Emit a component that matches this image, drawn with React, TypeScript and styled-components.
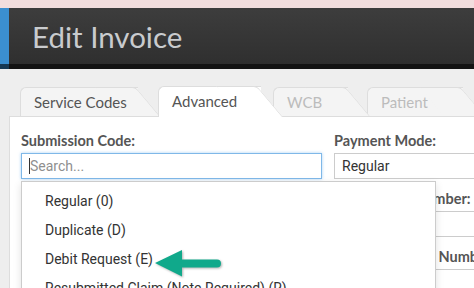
import React from 'react'
import styled, { createGlobalStyle, css } from 'styled-components'

const GlobalStyle = createGlobalStyle`
  html, body {
    margin: 0;
    padding: 0;
    background: #eeeeee;
    overflow: hidden;
  }
  body {
    font-family: Lato, "Open Sans", sans-serif;
  }
`

const Page = styled.div`
  position: relative;
  width: 474px;
  height: 288px;
  overflow: hidden;
`

const AlertStrip = styled.div`
  height: 8px;
  background: #f2dede;
`

const Header = styled.header`
  display: flex;
  height: 61px;
  background: linear-gradient(#3d3d3d, #2e2e2e);
  box-shadow: inset 0 -5px 0 #141414;
`

const Accent = styled.div`
  width: 9px;
  background: #3b8fd0;
  box-shadow: inset 0 -5px 0 rgba(0, 0, 0, 0.6);
`

const Title = styled.h1`
  margin: 0;
  padding: 0 0 5px 23px;
  display: flex;
  align-items: center;
  font-family: Lato, sans-serif;
  font-weight: 400;
  font-size: 29.5px;
  color: #c9cbce;
`

const Content = styled.div`
  padding-top: 17px;
`

const TabRow = styled.div`
  position: relative;
  z-index: 2;
  display: flex;
  padding-left: 20px;
  margin-bottom: -1px;
`

const Tab = styled.div<{
  $active?: boolean
  $disabled?: boolean
  $z: number
  $width: number
  $overlap: number
}>`
  position: relative;
  flex: 0 0 auto;
  box-sizing: border-box;
  width: ${(p) => p.$width}px;
  margin-right: -${(p) => p.$overlap}px;
  z-index: ${(p) => (p.$active ? 20 : p.$z)};
  height: ${(p) => (p.$active ? 31 : 30)}px;
  line-height: 30px;
  padding-left: 14px;
  white-space: nowrap;
  font-size: 15px;
  color: ${(p) => (p.$disabled ? '#bcbcbc' : '#555')};
  margin-top: ${(p) => (p.$active ? '0' : '1px')};

  &::before,
  &::after {
    content: '';
    position: absolute;
    z-index: -1;
    top: 0;
    bottom: ${(p) => (p.$active ? '0' : '1px')};
    background: ${(p) => (p.$active ? '#ffffff' : '#f4f4f4')};
    border-top: 1px solid #dddddd;
  }

  &::before {
    left: 0;
    right: 22px;
    border-left: 1px solid #dddddd;
    border-top-left-radius: 6px;
  }

  &::after {
    right: 0;
    width: 40px;
    border-right: 1px solid #dddddd;
    border-top-right-radius: 4px;
    transform: skewX(40deg);
    transform-origin: bottom right;
  }
`

const Panel = styled.div`
  position: relative;
  z-index: 1;
  margin-left: 9px;
  width: 700px;
  height: 300px;
  background: #ffffff;
  border-top: 1px solid #dddddd;
  border-left: 1px solid #dddddd;
  padding: 14px 0 0 11px;
`

const FormGrid = styled.div`
  display: grid;
  grid-template-columns: 301px 301px;
  column-gap: 12px;
`

const Column = styled.div`
  display: flex;
  flex-direction: column;
  gap: 10px;
`

const Field = styled.div`
  position: relative;
  display: flex;
  flex-direction: column;
  gap: 2px;
`

const Label = styled.label`
  font-family: Lato, sans-serif;
  font-weight: 700;
  font-size: 14.5px;
  line-height: 20px;
  color: #555;
  white-space: nowrap;
`

const controlBase = css`
  box-sizing: border-box;
  height: 26px;
  width: 100%;
  margin: 0;
  border: 1px solid #cccccc;
  background: #ffffff;
  font-family: Roboto, sans-serif;
  font-size: 14px;
  color: #333;
  outline: none;
`

const SearchInput = styled.input`
  ${controlBase};
  padding: 0 8px;
  border-color: #7fb8e8;
  box-shadow: 0 0 3px rgba(102, 175, 233, 0.55);
  caret-color: transparent;

  &::placeholder {
    color: #8f8f8f;
  }
`

const Caret = styled.span`
  position: absolute;
  left: 8px;
  bottom: 5px;
  width: 1px;
  height: 16px;
  background: #333;
`

const InputWrap = styled.div`
  position: relative;
  z-index: 5;
`

const SelectBox = styled.div`
  ${controlBase};
  padding: 0 7px;
  line-height: 24px;
`

const TextBox = styled.div`
  ${controlBase};
`

const Menu = styled.ul`
  position: absolute;
  z-index: 10;
  top: calc(100% + 2px);
  left: 0;
  width: 415px;
  box-sizing: border-box;
  margin: 0;
  padding: 5px 0 0;
  list-style: none;
  background: #ffffff;
  border: 1px solid #cccccc;
  box-shadow: 0 3px 8px rgba(0, 0, 0, 0.12);
  height: 140px;
`

const MenuItem = styled.li`
  padding: 0 23px;
  font-family: Roboto, sans-serif;
  font-size: 14px;
  line-height: 29px;
  color: #333;
  white-space: nowrap;
`

const Pointer = styled.svg`
  position: absolute;
  left: 150px;
  top: 246px;
  z-index: 30;
  filter: drop-shadow(1px 1.5px 1px rgba(0, 0, 0, 0.3));
`

const tabs = [
  { label: 'Service Codes', width: 140, overlap: 2 },
  { label: 'Advanced', width: 125, overlap: 10, active: true },
  { label: 'WCB', width: 97, overlap: 3, disabled: true },
  { label: 'Patient', width: 118, overlap: 0, disabled: true },
]

const codes = [
  'Regular (0)',
  'Duplicate (D)',
  'Debit Request (E)',
  'Resubmitted Claim (Note Required) (R)',
]

export default function App() {
  return (
    <Page>
      <GlobalStyle />
      <AlertStrip />
      <Header>
        <Accent />
        <Title>Edit Invoice</Title>
      </Header>
      <Content>
        <TabRow>
          {tabs.map((t, i) => (
            <Tab
              key={t.label}
              $active={t.active}
              $disabled={t.disabled}
              $z={10 - i}
              $width={t.width}
              $overlap={t.overlap}
            >
              {t.label}
            </Tab>
          ))}
        </TabRow>
        <Panel>
          <FormGrid>
            <Column>
              <Field>
                <Label>Submission Code:</Label>
                <InputWrap>
                  <SearchInput placeholder="Search..." readOnly />
                  <Caret />
                  <Menu>
                    {codes.map((c) => (
                      <MenuItem key={c}>{c}</MenuItem>
                    ))}
                  </Menu>
                </InputWrap>
              </Field>
            </Column>
            <Column>
              <Field>
                <Label>Payment Mode:</Label>
                <SelectBox>Regular</SelectBox>
              </Field>
              <Field>
                <Label>Practitioner Number:</Label>
                <TextBox />
              </Field>
              <Field>
                <Label>Original Invoice Number</Label>
                <TextBox />
              </Field>
            </Column>
          </FormGrid>
        </Panel>
      </Content>
      <Pointer width="76" height="36" viewBox="0 0 76 36">
        <path
          d="M5 17 L32 4 L32 13.5 L67 13.5 A4 4 0 0 1 67 21.5 L32 21.5 L32 30.5 Z"
          fill="#10a98b"
        />
      </Pointer>
    </Page>
  )
}
